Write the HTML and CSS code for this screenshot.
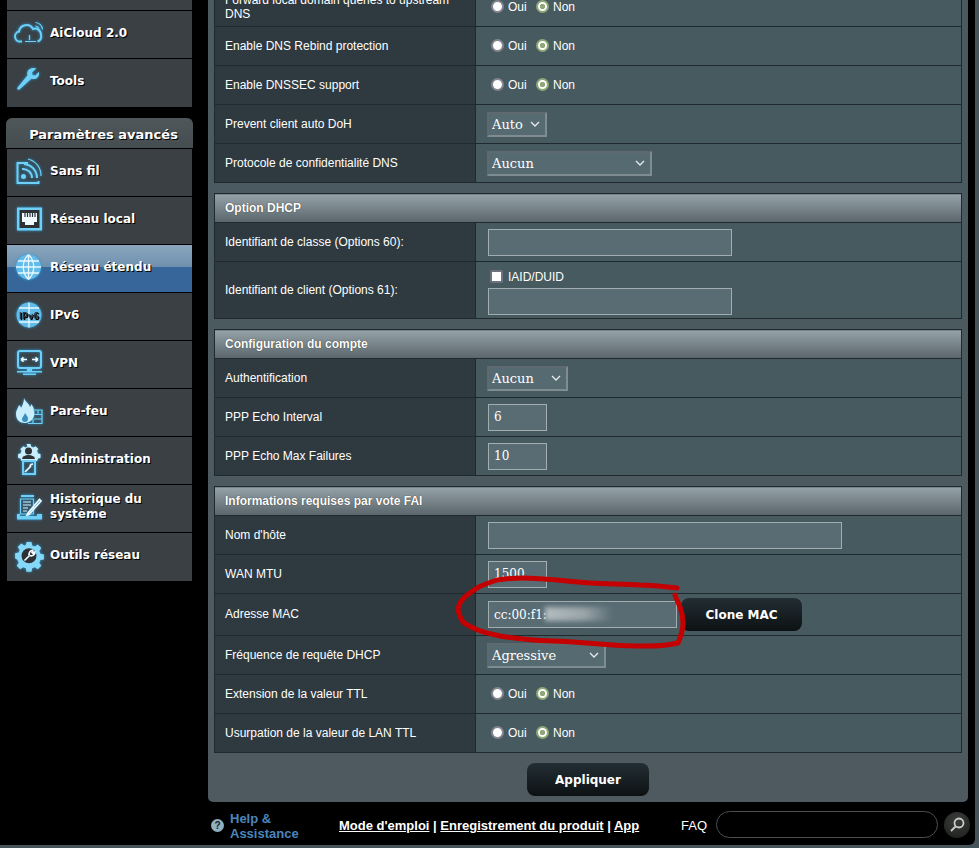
FILE: index.html
```html
<!DOCTYPE html>
<html lang="fr">
<head>
<meta charset="utf-8">
<title>Réseau étendu</title>
<link rel="stylesheet" href="styles.css">
</head>
<body>
<div class="frame">
  <aside class="sidebar">
    <nav class="group">
      <div class="item stub"></div>
      <a class="item"><svg class="ico" viewBox="0 0 30 30"><path class="ln" d="M8 21.500H6a5 5 0 0 1-1-9.900A7.500 7.500 0 0 1 19 9a6 6 0 0 1 8 6 5 5 0 0 1-3.500 6.500"/><path class="ln1" d="M21.500 2.500a7.500 7.500 0 0 1 7 7M21.500 6a4 4 0 0 1 3.500 3.500M11 21.500h11M15.500 15v5"/></svg><span>AiCloud 2.0</span></a>
      <a class="item last"><svg class="ico" viewBox="0 0 30 30"><path class="fl" transform="translate(-2 -1)" d="M24.500 1.500l-4.300 3.800.3 2.700 2.700.6 3.700-3.900c.6 3-.2 5.200-2.200 6.500-1.800 1.100-3.700 1.100-5.300.5L7.500 22.500c-1.200 1-2.900-.6-1.900-2L15.500 8.300c-.7-2.200-.3-4.100 1.300-5.600 2-1.700 4.700-2.200 7.700-1.200z"/></svg><span>Tools</span></a>
    </nav>
    <div class="side-title">Paramètres avancés</div>
    <nav class="group">
      <a class="item"><svg class="ico" viewBox="0 0 30 30"><path class="ln" d="M14 5H3.500v20h21v-2"/><circle class="fl" cx="9.500" cy="18.500" r="2.500"/><path class="ln" d="M8 11a9 9 0 0 1 10 9M10 6a14 14 0 0 1 13 14"/><path class="ln1" d="M14 1a17 17 0 0 1 13 17"/></svg><span>Sans fil</span></a>
      <a class="item"><svg class="ico" viewBox="0 0 30 30"><rect class="fl" x="3" y="1.500" width="25" height="23"/><rect class="bk" x="5.500" y="4" width="20" height="18"/><path class="wh" d="M8 7h15v9h-3v3h-9v-3H8z"/><path class="bk1" d="M11 7v4M13.500 7v4M16 7v4M18.500 7v4M21 7v4"/></svg><span>Réseau local</span></a>
      <a class="item on"><svg class="ico" viewBox="0 0 30 30"><circle class="gl" cx="14.500" cy="13" r="12.500"/><path class="gr" d="M2 13h25M4 7h21M4 19h21M14.500 .5v25M14.500 .5c-7 7-7 18 0 25M14.500 .5c7 7 7 18 0 25"/></svg><span>Réseau étendu</span></a>
      <a class="item"><svg class="ico" viewBox="0 0 30 30"><circle class="gl" cx="15" cy="13" r="12.500"/><path class="gr" d="M5 6h20M5 20h20M15 .5v25"/><text class="ipv" x="15" y="17" text-anchor="middle">IPv6</text></svg><span>IPv6</span></a>
      <a class="item"><svg class="ico" viewBox="0 0 30 30"><rect class="ln" x="4" y="1" width="23" height="17" rx="2"/><path class="wh1" d="M7 9.500h6M7 9.500l2.500-2.200M7 9.500l2.500 2.200M24 9.500h-6M24 9.500l-2.500-2.200M24 9.500l-2.500 2.200"/><path class="fl" d="M13 18h5v3h-5zM3 21h25v1.500H3zM9 23.500h13V25H9z"/></svg><span>VPN</span></a>
      <a class="item"><svg class="ico" viewBox="0 0 30 30"><path class="wf" d="M10 0c1 4 5 5 6 9 1-1 1-2 1-3 3 3 4 8 3 12-1 4-5 7-9 7-5 0-9-3-9-9 0-4 2-5 3-9 1 1 2 2 2 3 2-3 3-7 3-10z"/><path class="fl2" d="M11 15c1 2 3 3 3 6a3 3 0 0 1-6 0c0-2 2-3 3-6z"/><path class="ln1" d="M14 25.500h14V12h-9M20 16.500h8M20 21h8M24 12v4.500M19 21v4.500"/></svg><span>Pare-feu</span></a>
      <a class="item"><svg class="ico" viewBox="0 0 30 30"><path class="wf" d="M12.500-2h4l.6 2.400 2.300 1 2.200-1.200 2.700 2.700-1.200 2.200 1 2.300 2.400.6v4l-2.400.6-1 2.300H7.500l-1-2.300-2.400-.6v-4l2.400-.6 1-2.300-1.200-2.200L9.400.2l2.200 1.200 2-1z"/><circle class="bk" cx="14.500" cy="5" r="3.500"/><path class="bk" d="M8 13a6.500 4 0 0 1 13 0z"/><path class="ln" d="M9 15h12v13H9z"/><path class="wh1" d="M11 26l6-6M19 18a3 3 0 0 0-3 3"/></svg><span>Administration</span></a>
      <a class="item hist"><svg class="ico" viewBox="0 0 30 30"><path class="fl" d="M7 1h13v2H7z"/><path class="ln1" d="M6.500 5h13v15h-13z"/><path class="wh2" d="M9 8h8M9 11h8M9 14h5M9 17h4"/><path class="wh1" d="M14 19l-1 2 2-.5L27 7l-1.500-1.500z"/><path class="fl" d="M3 20h3v2h17v-2h5v5.500H3z"/></svg><span>Historique du système</span></a>
      <a class="item last"><svg class="ico" viewBox="0 0 30 30"><path class="cg" d="M12.500 0h5l.7 3.500 2.600 1.100 3-2 3.500 3.500-2 3 1.100 2.600 3.500.7v5l-3.500.7-1.100 2.600 2 3-3.500 3.500-3-2-2.600 1.100-.7 3.500h-5l-.7-3.500-2.600-1.100-3 2-3.500-3.500 2-3-1.100-2.600L1.100 16.300v-5l3.500-.7 1.100-2.600-2-3L7.300 1.500l3 2 1.600-.5z"/><circle class="bk" cx="15" cy="13.800" r="7.500"/><path class="wh1" d="M10.500 18.500l5-5M19.500 8.500a3.500 3.500 0 0 0-4 5M19.500 8.500l-1.500 2 1 1 2-1.500a3.500 3.500 0 0 1-5 3.500"/></svg><span>Outils réseau</span></a>
    </nav>
  </aside>

  <main class="main">
    <section class="panel">
      <table class="tbl first">
        <colgroup><col class="c1"><col></colgroup>
        <tr><td class="lab">Forward local domain queries to upstream DNS</td><td class="val"><label class="rad"><input type="radio" name="a"> Oui</label><label class="rad"><input type="radio" name="a" checked> Non</label></td></tr>
        <tr><td class="lab">Enable DNS Rebind protection</td><td class="val"><label class="rad"><input type="radio" name="b"> Oui</label><label class="rad"><input type="radio" name="b" checked> Non</label></td></tr>
        <tr><td class="lab">Enable DNSSEC support</td><td class="val"><label class="rad"><input type="radio" name="c"> Oui</label><label class="rad"><input type="radio" name="c" checked> Non</label></td></tr>
        <tr><td class="lab">Prevent client auto DoH</td><td class="val"><select class="sel w60"><option>Auto</option></select></td></tr>
        <tr><td class="lab">Protocole de confidentialité DNS</td><td class="val"><select class="sel w165"><option>Aucun</option></select></td></tr>
      </table>

      <table class="tbl">
        <colgroup><col class="c1"><col></colgroup>
        <tr><th colspan="2">Option DHCP</th></tr>
        <tr><td class="lab">Identifiant de classe (Options 60):</td><td class="val"><input class="txt w244" type="text"></td></tr>
        <tr class="r57"><td class="lab">Identifiant de client (Options 61):</td><td class="val stack"><label class="chk"><input type="checkbox"> IAID/DUID</label><input class="txt w244" type="text"></td></tr>
      </table>

      <table class="tbl">
        <colgroup><col class="c1"><col></colgroup>
        <tr><th colspan="2">Configuration du compte</th></tr>
        <tr><td class="lab">Authentification</td><td class="val"><select class="sel w81"><option>Aucun</option></select></td></tr>
        <tr><td class="lab">PPP Echo Interval</td><td class="val"><input class="txt w59" type="text" value="6"></td></tr>
        <tr><td class="lab">PPP Echo Max Failures</td><td class="val"><input class="txt w59" type="text" value="10"></td></tr>
      </table>

      <table class="tbl">
        <colgroup><col class="c1"><col></colgroup>
        <tr><th colspan="2">Informations requises par vote FAI</th></tr>
        <tr><td class="lab">Nom d'hôte</td><td class="val"><input class="txt w354" type="text"></td></tr>
        <tr><td class="lab">WAN MTU</td><td class="val"><input class="txt w59" type="text" value="1500"></td></tr>
        <tr class="r42"><td class="lab">Adresse MAC</td><td class="val mac"><span class="macwrap"><input class="txt w189" type="text" value="cc:00:f1:"><span class="smear"></span></span><button class="btn clone" type="button">Clone MAC</button></td></tr>
        <tr><td class="lab">Fréquence de requête DHCP</td><td class="val"><select class="sel w119"><option>Agressive</option></select></td></tr>
        <tr><td class="lab">Extension de la valeur TTL</td><td class="val"><label class="rad"><input type="radio" name="d"> Oui</label><label class="rad"><input type="radio" name="d" checked> Non</label></td></tr>
        <tr><td class="lab">Usurpation de la valeur de LAN TTL</td><td class="val"><label class="rad"><input type="radio" name="e"> Oui</label><label class="rad"><input type="radio" name="e" checked> Non</label></td></tr>
      </table>

      <div class="apply"><button class="btn go" type="button">Appliquer</button></div>
    </section>

    <footer class="foot">
      <span class="qm">?</span>
      <a class="help">Help &amp;<br>Assistance</a>
      <div class="links"><a>Mode d'emploi</a> | <a>Enregistrement du produit</a> | <a>App</a></div>
      <span class="faq">FAQ</span>
      <input class="search" type="text">
      <span class="sbtn"><svg viewBox="0 0 20 20"><circle cx="12" cy="8" r="4.500"/><path d="M8.500 11.500L4 16"/></svg></span>
    </footer>
  </main>
</div>
<svg class="scribble" viewBox="0 0 979 848"><path d="M677 588C660 586 650 585 640 585C625 584 610 584 590 583C575 582 565 581 557 580C545 579 535 578 523 578C512 578 505 579 497 580C488 583 482 585 477 588C470 593 465 596 462 600C459 604 458 607 458 610C459 616 461 619 463 622C468 626 473 628 478 630C485 633 492 634 500 636C510 638 522 639 533 640C545 641 560 641 573 642C586 643 600 644 613 645C625 646 636 646 647 646C660 646 670 645 678 643C681 636 683 630 683 623C683 616 682 612 680 607C678 602 676 598 675 595" /></svg>
</body>
</html>
```
FILE: styles.css
```css
* { box-sizing: border-box; }
html, body { margin: 0; height: 848px; overflow: hidden; }
body { background: #46545a; font-family: "Liberation Sans", Arial, sans-serif; color: #fff; position: relative; }

.frame { width: 975px; height: 845px; background: #000; display: flex; border-bottom-right-radius: 6px; overflow: hidden; }

/* Sidebar */
.sidebar { width: 208px; flex: none; padding-left: 7px; font: bold 12px/15px "DejaVu Sans", sans-serif; }
.group { display: flex; flex-direction: column; gap: 1px; width: 185px; background: #000; }
.item { height: 47px; background: #3a4044; display: flex; align-items: center; gap: 6px; padding: 0 0 2px 7px; color: #fff; text-shadow: 1px 1px 0 #000; }
.item.stub { height: 10px; padding: 0; }
.item.last { height: 48px; padding-bottom: 4px; }
.item.hist { padding-bottom: 4px; }
.item.on { background: linear-gradient(#8ba6be 0, #6f91ae 46%, #37679a 46%, #37679a 100%); }
.item span { display: block; width: 130px; }
.side-title { width: 187px; height: 30px; margin: 11px 0 1px -1px; background: linear-gradient(#4f575b, #454d51); border-radius: 6px 6px 0 0; text-align: center; font-size: 13px; line-height: 34px; padding-left: 8px; text-shadow: 1px 1px 0 #000; white-space: nowrap; }

.ico { width: 30px; height: 30px; flex: none; overflow: visible; margin-top: 2px; filter: drop-shadow(0 0 1.500px #2a9ad8); }
.last .ico, .hist .ico { margin-top: 4px; }
.ln { fill: none; stroke: #6ed0f6; stroke-width: 2; }
.ln1 { fill: none; stroke: #6ed0f6; stroke-width: 1.200; }
.fl { fill: #6ed0f6; }
.fl2 { fill: #3a8fc0; }
.wf { fill: #c8eefc; }
.cg { fill: #86d8f8; }
.bk { fill: #2d3236; }
.bk1 { fill: none; stroke: #2d3236; stroke-width: 1.200; }
.wh { fill: #f2fbff; }
.wh1 { fill: none; stroke: #f2fbff; stroke-width: 1.600; }
.wh2 { fill: none; stroke: #d8f3fd; stroke-width: 1.200; }
.gl { fill: #62bcea; }
.gr { fill: none; stroke: #e8f8ff; stroke-width: 1.300; }
.ipv { font: bold 9px "DejaVu Sans Condensed", "DejaVu Sans", sans-serif; fill: #2b3a44; }

/* Main */
.main { width: 760px; display: flex; flex-direction: column; height: 845px; }
.panel { height: 802px; flex: none; background: linear-gradient(#4a5a60, #4e5a60); border-radius: 0 0 5px 5px; padding: 0 6px; overflow: hidden; }
.tbl { width: 748px; border-collapse: collapse; table-layout: fixed; margin-bottom: 10px; font-size: 12px; }
.tbl.first { margin-top: -13px; }
.c1 { width: 261px; }
.tbl td { border: 1px solid #20292d; height: 39px; padding: 0; }
.tbl th { height: 29px; border: 1px solid #20292d; text-align: left; padding: 0 0 0 10px; background: linear-gradient(#95a2a7, #59656b); font-weight: bold; color: #fff; text-shadow: 0 0 1px #222; }
.tbl .lab { padding: 0 10px; background: #2f3a40; color: #fff; line-height: 14px; }
.tbl .val { background: #475a60; padding-left: 12px; }
.tbl .val.stack { padding-top: 4px; }
.tbl .r57 td { height: 57px; }
.tbl .r42 td { height: 42px; }
.tbl .r42 .lab { padding-bottom: 2px; }

.rad { display: inline-flex; align-items: center; width: 45px; margin: 0 -3px 0 3px; padding-top: 2px; color: #fff; font-size: 12px; white-space: nowrap; }
.rad input, .chk input { appearance: none; margin: 0 4px 0 0; width: 13px; height: 13px; flex: none; background: #fff; }
.rad input { border-radius: 50%; border: 2px solid #85858f; }
.rad input:checked { border-color: #8fa877; background: radial-gradient(circle, #8fa877 0 2.500px, #fff 3px); }
.chk { display: flex; align-items: center; margin: 0 0 4px 2px; font-size: 12px; }
.chk input { border: 2px solid #6e7180; border-radius: 2px; margin-right: 5px; }

.sel { height: 25px; margin-left: -1px; appearance: none; color: #fff; font: 13px "DejaVu Serif", serif; border: 2px solid; border-color: #5e6a70 #7f8c92 #7f8c92 #5e6a70; padding: 0 0 0 3px; display: block; background: #566a72 url("data:image/svg+xml,%3Csvg xmlns='http://www.w3.org/2000/svg' width='10' height='6'%3E%3Cpath d='M1 1l4 4 4-4' fill='none' stroke='%23e6ecee' stroke-width='1.300'/%3E%3C/svg%3E") no-repeat right 5px center; }
.w60 { width: 60px; } .w81 { width: 81px; } .w119 { width: 119px; } .w165 { width: 165px; }
.txt { height: 27px; background: #596c74; color: #fff; border: 1px solid #a2adb1; font: 12px "DejaVu Serif", serif; padding: 0 5px; display: block; outline: 0; }
.w59 { width: 59px; } .w189 { width: 189px; } .w244 { width: 244px; } .w354 { width: 354px; }

.mac > * { vertical-align: middle; }
.val.mac { font-size: 0; }
.macwrap { display: inline-block; position: relative; }
.smear { position: absolute; left: 57px; top: 6px; width: 66px; height: 14px; background: linear-gradient(90deg, #b4bdc0, #98a4a8 60%, #5c6f77); filter: blur(2.500px); }
.btn { border: 0; border-radius: 8px; background: linear-gradient(#222e34, #0d1113); color: #fff; font: bold 12px "DejaVu Sans", sans-serif; height: 33px; padding: 0; }
.clone { width: 121px; margin-left: 4px; }
.apply { display: flex; justify-content: center; }
.go { width: 122px; }

/* Footer */
.foot { flex: 1; display: flex; align-items: center; font-size: 13px; padding: 4px 0 0 3px; }
.foot > * { flex: none; }
.qm { width: 13px; height: 13px; border-radius: 50%; background: #8fb1c2; color: #1a2226; font: bold 10px/13px "Liberation Sans", sans-serif; text-align: center; }
.help { width: 109px; margin-left: 6px; color: #4a86bc; font-weight: bold; line-height: 15px; }
.links { width: 342px; font-weight: bold; }
.links a { text-decoration: underline; }
.faq { width: 35px; }
.search { width: 222px; height: 27px; border: 1px solid #4a4f52; border-radius: 14px; background: #000; outline: 0; margin-top: -2px; }
.sbtn { width: 26px; height: 26px; border-radius: 50%; background: radial-gradient(circle at 50% 30%, #3a3d3a, #1c1e1c); margin: -2px 0 0 6px; display: flex; align-items: center; justify-content: center; }
.sbtn svg { width: 20px; height: 20px; fill: none; stroke: #ccc; stroke-width: 1.800; }

.scribble { position: absolute; left: 0; top: 0; width: 979px; height: 848px; pointer-events: none; fill: none; stroke: #c40000; stroke-width: 5; stroke-linecap: round; }
```
